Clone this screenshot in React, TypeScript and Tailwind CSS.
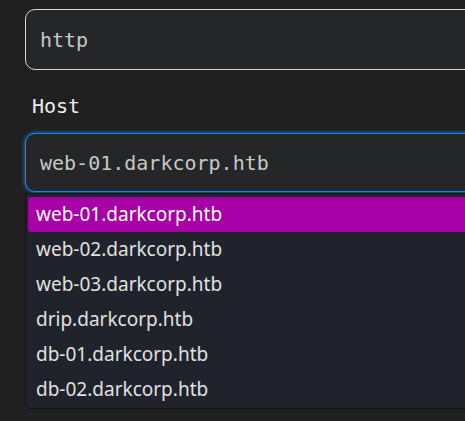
import React from "react";

const items = [
  "web-01.darkcorp.htb",
  "web-02.darkcorp.htb",
  "web-03.darkcorp.htb",
  "drip.darkcorp.htb",
  "db-01.darkcorp.htb",
  "db-02.darkcorp.htb",
];

export default function App() {
  return (
    <div className="w-[465px] h-[421px] overflow-hidden bg-[#202020]">
      <div className="pl-[25px] pt-[9px] w-[560px] flex flex-col">
        <div className="h-[61px] rounded-[10px] border border-[#d6d6d6] bg-[#252628] flex items-center pl-[14px] text-[20px] text-[#c8c8c8] font-['DejaVu_Sans_Mono',monospace]">
          http
        </div>
        <div className="mt-[22px] ml-[7px] text-[20px] leading-[28px] font-normal text-[#ededed] font-['DejaVu_Sans_Mono',monospace]">
          Host
        </div>
        <div className="mt-[13px] h-[59px] rounded-[10px] border border-[#1a84f0] shadow-[0_0_4px_#1a84f0] bg-[#252628] flex items-center pl-[14px] text-[20px] text-[#c8c8c8] font-['DejaVu_Sans_Mono',monospace]">
          web-01.darkcorp.htb
        </div>
        <div className="mt-px h-[216px] rounded-b-[6px] border border-[#111216] bg-[#20232b] pt-[3px] px-[2px] flex flex-col font-['Noto_Sans',sans-serif]">
          {items.map((it, i) => (
            <div
              key={it}
              className={
                i === 0
                  ? "h-[35px] shrink-0 rounded-[3px] bg-[#a600a6] text-white text-[19px] flex items-center pl-[8px]"
                  : "h-[35px] shrink-0 text-[#e0e0e0] text-[19px] flex items-center pl-[8px]"
              }
            >
              {it}
            </div>
          ))}
        </div>
      </div>
    </div>
  );
}
